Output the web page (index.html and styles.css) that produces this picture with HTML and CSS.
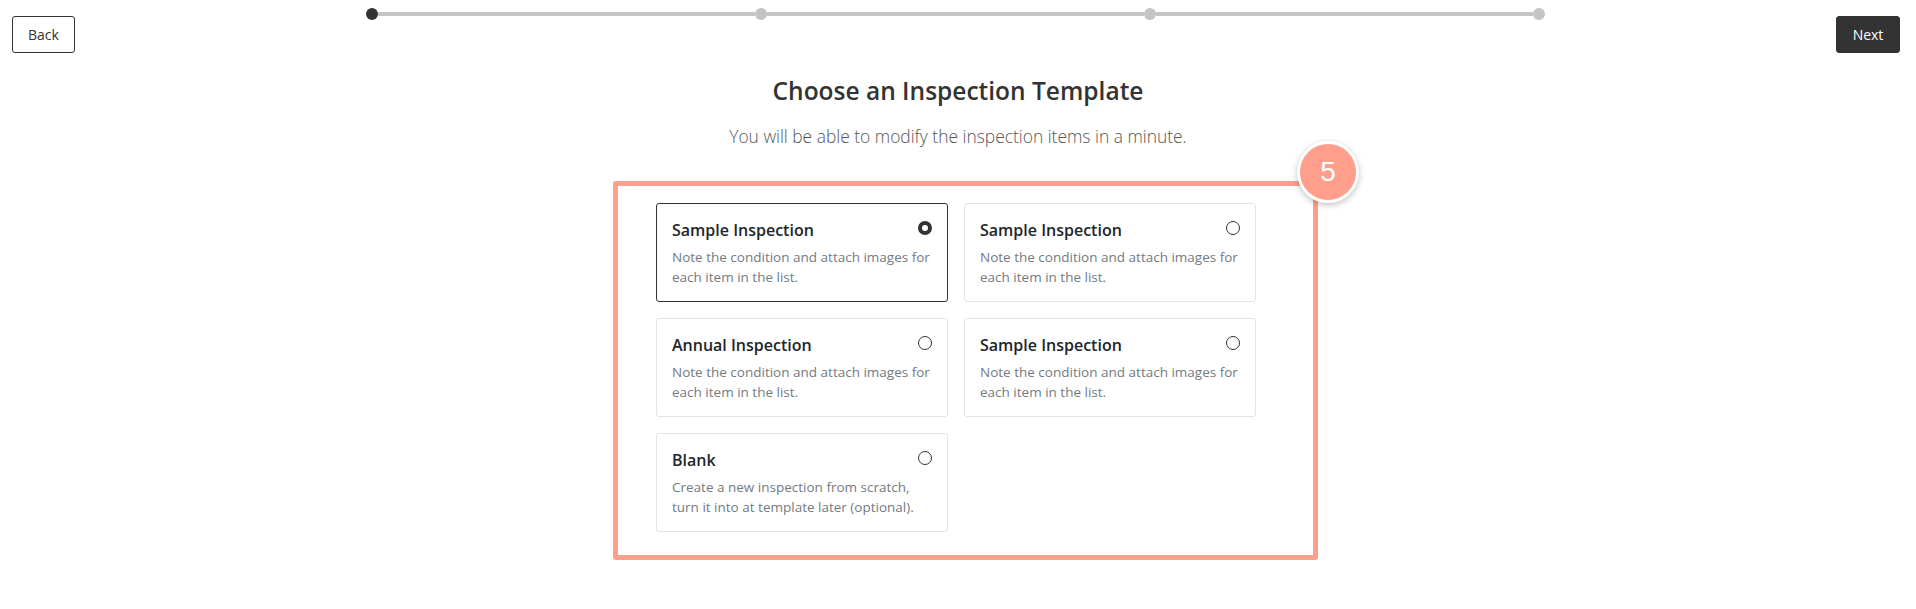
FILE: index.html
```html
<!DOCTYPE html>
<html lang="en">
<head>
    <meta charset="UTF-8">
    <meta name="viewport" content="width=device-width, initial-scale=1.0">
    <title>Choose an Inspection Template</title>
    <link rel="stylesheet" href="styles.css">
</head>
<body>
    <div id="top">
        <button class="btn btn-back">Back</button>
        <div id="stepper">
            <span class="dot done"></span>
            <span class="line"></span>
            <span class="dot"></span>
            <span class="line"></span>
            <span class="dot"></span>
            <span class="line"></span>
            <span class="dot"></span>
        </div>
        <button class="btn btn-next">Next</button>
    </div>

    <div id="main">
        <h1>Choose an Inspection Template</h1>
        <p class="sub">You will be able to modify the inspection items in a minute.</p>

        <div id="frame">
            <div class="badge">5</div>
            <div id="cards">
                <div class="card selected">
                    <div class="chead">
                        <h3>Sample Inspection</h3>
                        <span class="radio on"></span>
                    </div>
                    <p>Note the condition and attach images for each item in the list.</p>
                </div>
                <div class="card">
                    <div class="chead">
                        <h3>Sample Inspection</h3>
                        <span class="radio"></span>
                    </div>
                    <p>Note the condition and attach images for each item in the list.</p>
                </div>
                <div class="card">
                    <div class="chead">
                        <h3>Annual Inspection</h3>
                        <span class="radio"></span>
                    </div>
                    <p>Note the condition and attach images for each item in the list.</p>
                </div>
                <div class="card">
                    <div class="chead">
                        <h3>Sample Inspection</h3>
                        <span class="radio"></span>
                    </div>
                    <p>Note the condition and attach images for each item in the list.</p>
                </div>
                <div class="card">
                    <div class="chead">
                        <h3>Blank</h3>
                        <span class="radio"></span>
                    </div>
                    <p>Create a new inspection from scratch, turn it into at template later (optional).</p>
                </div>
            </div>
        </div>
    </div>
</body>
</html>
```

FILE: styles.css
```css
* {
    margin: 0;
    padding: 0;
    box-sizing: border-box;
    font-family: "Open Sans", "Noto Sans", sans-serif;
}
html,body {
    width: 100%;
    height: 100%;
    background-color: #fff;
    color: #333;
}
#top {
    display: grid;
    grid-template-columns: auto 1fr auto;
    align-items: start;
    padding: 0 16px 0 12px;
}
.btn {
    height: 37px;
    margin-top: 16px;
    border-radius: 3px;
    font-size: 14px;
    cursor: pointer;
}
.btn-back {
    width: 63px;
    background-color: #fff;
    border: 1px solid #333;
    color: #333;
}
.btn-next {
    width: 64px;
    background-color: #333;
    border: 1px solid #333;
    color: #fff;
}
#stepper {
    justify-self: center;
    width: 1179px;
    margin-top: 8px;
    display: flex;
    align-items: center;
}
.dot {
    width: 12px;
    height: 12px;
    border-radius: 50%;
    background-color: #c4c4c4;
}
.dot.done {
    background-color: #333;
}
.line {
    flex: 1;
    height: 4px;
    background-color: #c4c4c4;
}
#main {
    display: flex;
    flex-direction: column;
    align-items: center;
}
h1 {
    margin-top: 23px;
    font-size: 24.5px;
    line-height: 30px;
    font-weight: 600;
    color: #333;
}
.sub {
    margin-top: 18px;
    font-size: 17.4px;
    line-height: 24px;
    font-weight: 300;
    color: #555;
}
#frame {
    position: relative;
    margin-top: 33px;
    margin-left: 15px;
    border: 5px solid #ff9e8a;
    border-radius: 3px;
    padding: 17px 57px 23px 38px;
}
.badge {
    position: absolute;
    top: -45px;
    right: -46px;
    width: 62px;
    height: 62px;
    border-radius: 50%;
    border: 3px solid #fff;
    background-color: #ff9e8a;
    box-shadow: 0 2px 6px rgba(0, 0, 0, 0.25);
    color: #fff;
    font-size: 28px;
    font-family: "Liberation Sans", sans-serif;
    display: flex;
    align-items: center;
    justify-content: center;
}
#cards {
    display: grid;
    grid-template-columns: 292px 292px;
    gap: 16px 16px;
}
.card {
    height: 99px;
    border: 1px solid #e4e4e4;
    border-radius: 3px;
    padding: 15px 15px 0 15px;
}
.card.selected {
    border-color: #333;
}
.chead {
    display: flex;
    justify-content: space-between;
    align-items: flex-start;
}
.card h3 {
    font-size: 16px;
    line-height: 22px;
    font-weight: 600;
    color: #212529;
}
.card p {
    max-width: 258px;
    margin-top: 6px;
    font-size: 13.5px;
    line-height: 20px;
    color: #737b82;
}
.radio {
    width: 14px;
    height: 14px;
    margin-top: 2px;
    border-radius: 50%;
    border: 1.5px solid #333;
}
.radio.on {
    border: 4.5px solid #333;
    background-color: #fff;
}
```
